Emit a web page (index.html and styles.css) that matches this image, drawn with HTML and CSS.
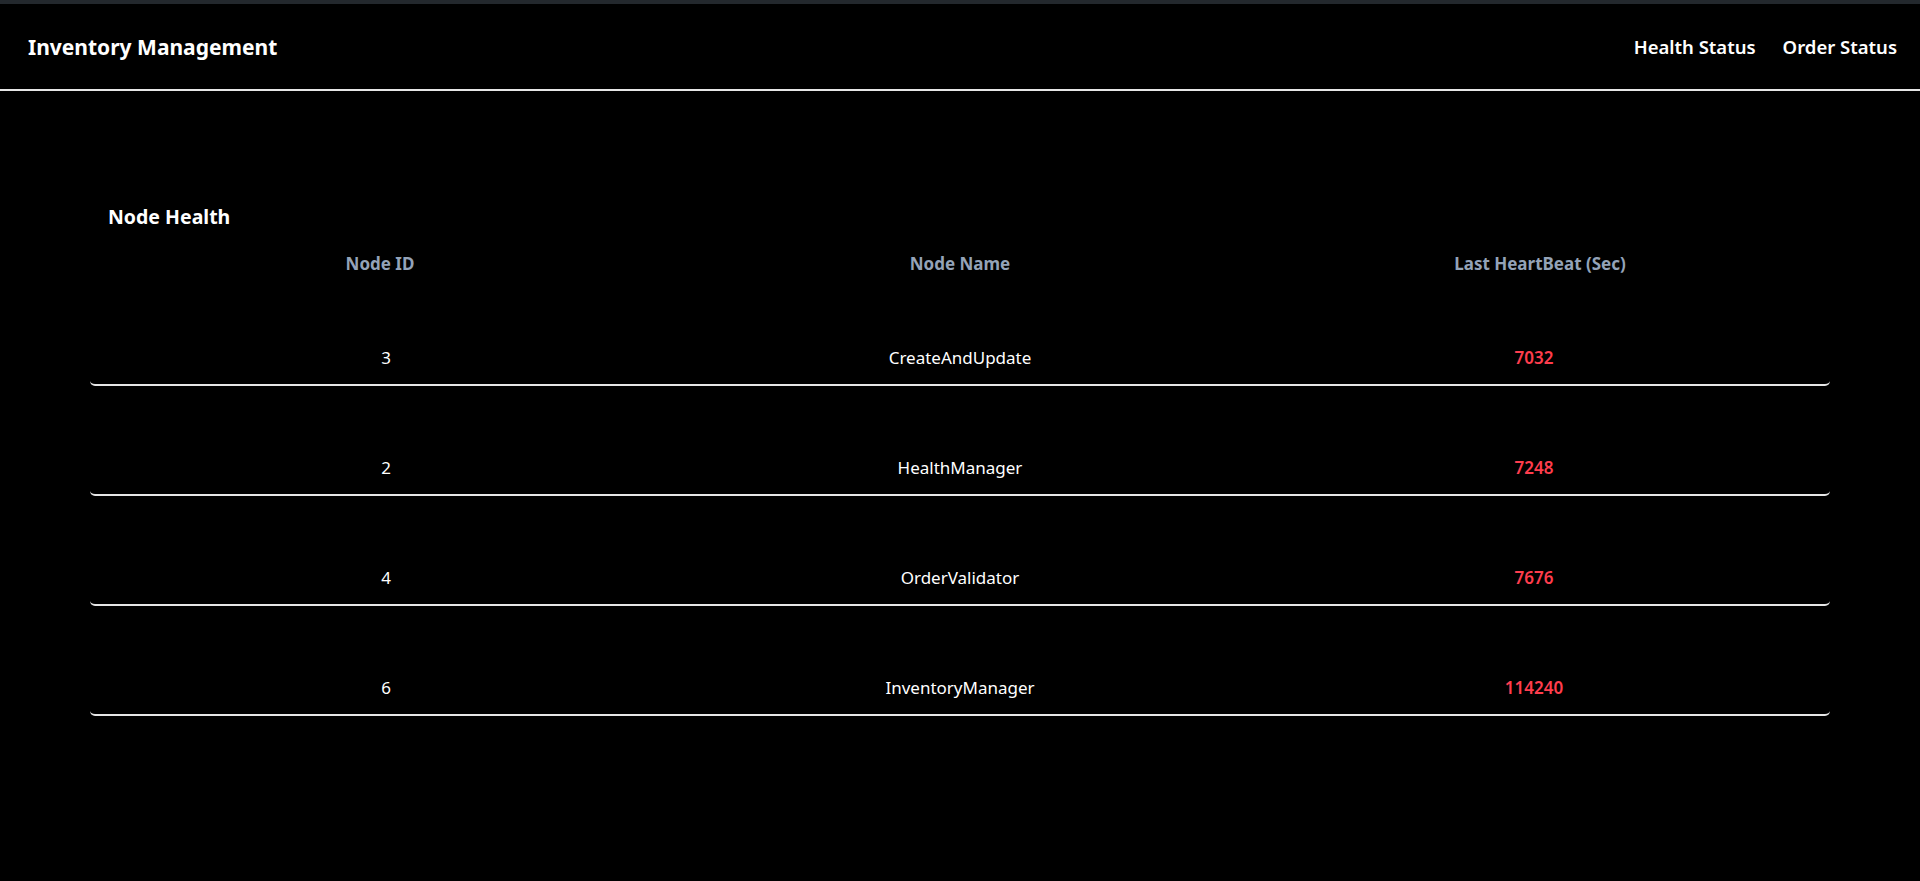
FILE: index.html
```html
<!DOCTYPE html>
<html lang="en">
<head>
<meta charset="utf-8">
<title>Inventory Management</title>
<link rel="stylesheet" href="styles.css">
</head>
<body>
<div class="topstrip"></div>
<header class="navbar">
  <div class="brand">Inventory Management</div>
  <nav class="nav">
    <a class="nav-link" href="#">Health Status</a>
    <a class="nav-link" href="#">Order Status</a>
  </nav>
</header>
<main class="main">
  <section class="panel">
    <h2 class="panel-title">Node Health</h2>
    <div class="table">
      <div class="row head">
        <div class="cell">Node ID</div>
        <div class="cell">Node Name</div>
        <div class="cell">Last HeartBeat (Sec)</div>
      </div>
      <div class="row data">
        <div class="cell">3</div>
        <div class="cell">CreateAndUpdate</div>
        <div class="cell beat">7032</div>
      </div>
      <div class="row data">
        <div class="cell">2</div>
        <div class="cell">HealthManager</div>
        <div class="cell beat">7248</div>
      </div>
      <div class="row data">
        <div class="cell">4</div>
        <div class="cell">OrderValidator</div>
        <div class="cell beat">7676</div>
      </div>
      <div class="row data">
        <div class="cell">6</div>
        <div class="cell">InventoryManager</div>
        <div class="cell beat">114240</div>
      </div>
    </div>
  </section>
</main>
</body>
</html>
```

FILE: styles.css
```css
* { box-sizing: border-box; }
html, body {
  margin: 0;
  padding: 0;
  background: #000;
  color: #fff;
  font-family: "Noto Sans", "Open Sans", sans-serif;
}
.topstrip {
  height: 4px;
  background: #23282d;
}
.navbar {
  height: 87px;
  display: flex;
  align-items: center;
  justify-content: space-between;
  padding: 0 23px 0 28px;
  border-bottom: 2px solid #e6e6e6;
}
.brand {
  font-size: 21px;
  font-weight: 700;
}
.nav {
  display: flex;
  gap: 27px;
}
.nav-link {
  color: #fff;
  text-decoration: none;
  font-size: 18.5px;
  font-weight: 600;
}
.main {
  padding: 114px 90px 0;
}
.panel-title {
  margin: 0 0 21px;
  padding-left: 18px;
  font-size: 19.5px;
  line-height: 24px;
  font-weight: 700;
}
.table {
  display: flex;
  flex-direction: column;
}
.row {
  display: grid;
  grid-template-columns: 1fr 1fr 1fr;
  text-align: center;
}
.row.head {
  height: 26px;
  align-items: center;
  color: #94a3b8;
  font-weight: 700;
  font-size: 17px;
}
.row.data {
  grid-template-columns: 592fr 556fr 592fr;
  height: 110px;
  align-items: end;
  padding-bottom: 15px;
  border-bottom: 2px solid #e6e6e6;
  border-radius: 0 0 5px 5px;
  font-size: 17px;
  line-height: 22px;
}
.beat {
  color: #ff3d4d;
  font-weight: 600;
}
```
